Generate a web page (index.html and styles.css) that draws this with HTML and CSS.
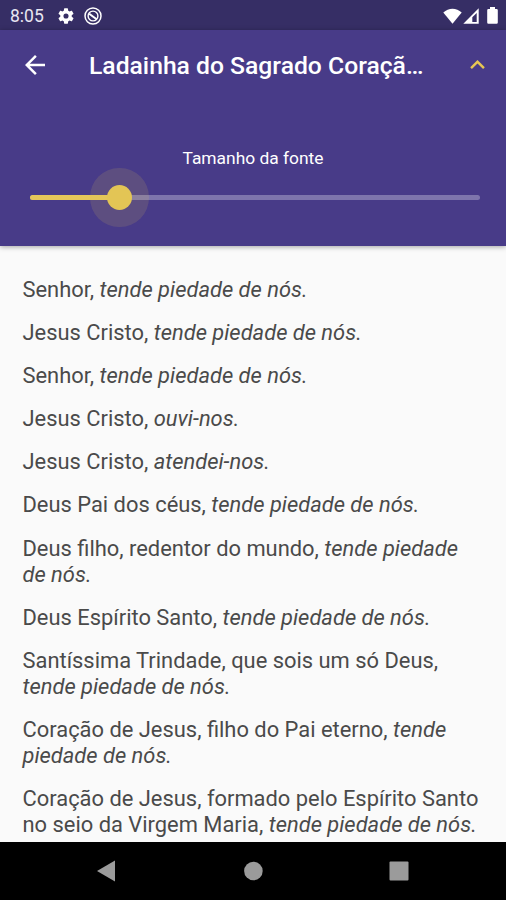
FILE: index.html
```
<!DOCTYPE html>
<html lang="pt-BR">
<head>
    <meta charset="UTF-8">
    <meta name="viewport" content="width=device-width, initial-scale=1.0">
    <link rel="stylesheet" href="styles.css">
    <title>Ladainha do Sagrado Coração</title>
</head>
<body>
    <div class="screen">
        <div class="status-bar">
            <span class="time">8:05</span>
            <svg class="gear" viewBox="2 2 20 20" width="16" height="16">
                <path fill="#fff" d="M19.14 12.94c.04-.3.06-.61.06-.94s-.02-.64-.07-.94l2.03-1.58a.49.49 0 0 0 .12-.61l-1.92-3.32a.49.49 0 0 0-.59-.22l-2.39.96a7 7 0 0 0-1.62-.94l-.36-2.54a.48.48 0 0 0-.48-.41h-3.84a.48.48 0 0 0-.47.41l-.36 2.54c-.59.24-1.13.57-1.62.94l-2.39-.96a.48.48 0 0 0-.59.22L2.74 8.87a.48.48 0 0 0 .12.61l2.03 1.58a6 6 0 0 0 0 1.88l-2.03 1.58a.49.49 0 0 0-.12.61l1.92 3.32c.12.22.37.29.59.22l2.39-.96c.5.38 1.03.7 1.62.94l.36 2.54c.05.24.24.41.48.41h3.84c.24 0 .44-.17.47-.41l.36-2.54a7 7 0 0 0 1.62-.94l2.39.96c.22.08.47 0 .59-.22l1.92-3.32a.47.47 0 0 0-.12-.61zM12 15.2a3.2 3.2 0 1 1 0-6.4 3.2 3.2 0 0 1 0 6.4z"/>
            </svg>
            <svg class="badge" viewBox="0 0 18 18" width="18" height="18" fill="none" stroke="#fff">
                <circle cx="9" cy="9" r="8" stroke-width="1.5"/>
                <circle cx="9" cy="9" r="4.9" stroke-width="1.4"/>
                <path d="M5.200 6.800l7.400 5.400" stroke-width="2"/>
            </svg>
            <div class="signals">
                <svg viewBox="0 0 19 16" width="19" height="16">
                    <path fill="#fff" d="M.3 4.6C5.5-.7 13.5-.7 18.7 4.6L9.5 15.8z"/>
                </svg>
                <svg viewBox="0 0 16 16" width="16" height="16">
                    <path fill="#fff" fill-rule="evenodd" d="M.3 15.7L15.7.3v15.4zM9.300 9.300v4.700h4.400V4.900z"/>
                </svg>
                <svg viewBox="0 0 11 17" width="11" height="17">
                    <path fill="#fff" d="M3 0h5v2h1.600q1.200 0 1.200 1.200v12.200q0 1.300-1.200 1.300H1.400Q.2 16.700.2 15.400V3.200Q.2 2 1.400 2H3z"/>
                </svg>
            </div>
        </div>

        <header class="app-bar">
            <div class="toolbar">
                <svg class="back" viewBox="4 4 16 16" width="20" height="20">
                    <path fill="#fff" d="M20 11H7.830l5.590-5.590L12 4l-8 8 8 8 1.410-1.410L7.830 13H20z"/>
                </svg>
                <h1>Ladainha do Sagrado Coraçã…</h1>
                <svg class="chevron" viewBox="6 8 12 7.400" width="15" height="9">
                    <path fill="#e7c653" d="M12 8l-6 6 1.410 1.410L12 10.830l4.590 4.580L18 14z"/>
                </svg>
            </div>
            <div class="font-size">Tamanho da fonte</div>
            <div class="slider">
                <div class="track"></div>
                <div class="track-active"></div>
                <div class="thumb"></div>
            </div>
        </header>

        <main class="prayer">
            <p>Senhor, <em>tende piedade de nós.</em></p>
            <p>Jesus Cristo, <em>tende piedade de nós.</em></p>
            <p>Senhor, <em>tende piedade de nós.</em></p>
            <p>Jesus Cristo, <em>ouvi-nos.</em></p>
            <p>Jesus Cristo, <em>atendei-nos.</em></p>
            <p>Deus Pai dos céus, <em>tende piedade de nós.</em></p>
            <p>Deus filho, redentor do mundo, <em>tende piedade de nós.</em></p>
            <p>Deus Espírito Santo, <em>tende piedade de nós.</em></p>
            <p>Santíssima Trindade, que sois um só Deus, <em>tende piedade de nós.</em></p>
            <p>Coração de Jesus, filho do Pai eterno, <em>tende piedade de nós.</em></p>
            <p>Coração de Jesus, formado pelo Espírito Santo no seio da Virgem Maria, <em>tende piedade de nós.</em></p>
        </main>

        <nav class="nav-bar">
            <svg viewBox="0 0 20 22" width="20" height="22"><path fill="#9b9b9b" d="M18 .5v21L0 11z"/></svg>
            <svg viewBox="0 0 20 20" width="20" height="20"><circle cx="10.400" cy="10" r="9.300" fill="#9b9b9b"/></svg>
            <svg viewBox="0 0 20 20" width="20" height="20"><rect x=".5" y=".5" width="19" height="19" rx="1" fill="#9b9b9b"/></svg>
        </nav>
    </div>
</body>
</html>
```
FILE: styles.css
```
body {
    font-family: Roboto, sans-serif;
    background-color: #fafafa;
    margin: 0;
}

.screen {
    display: flex;
    flex-direction: column;
    height: 900px;
    overflow: hidden;
}

.status-bar {
    display: flex;
    align-items: center;
    flex-shrink: 0;
    height: 30px;
    box-sizing: border-box;
    padding: 1px 8px 0 10px;
    background-color: #362e65;
    color: #ffffff;
}

.time {
    width: 48px;
    font-size: 17.5px;
    color: #e8e6f2;
}

.badge {
    margin-left: 10px;
}

.signals {
    display: flex;
    align-items: center;
    margin-left: auto;
}

.signals svg:nth-child(2) {
    margin: 0 8px 0 1px;
}

.app-bar {
    flex-shrink: 0;
    height: 216px;
    background-color: #483b88;
    color: #ffffff;
    box-shadow: 0 1px 5px rgba(0, 0, 0, 0.35);
    z-index: 1;
}

.toolbar {
    display: flex;
    align-items: center;
    height: 69px;
    padding: 0 21px 0 25px;
}

.toolbar h1 {
    margin: 2px 0 0 44px;
    font-size: 24.7px;
    font-weight: 500;
    line-height: 32px;
    white-space: nowrap;
}

.chevron {
    margin-left: auto;
}

.font-size {
    margin-top: 49px;
    text-align: center;
    font-size: 17.4px;
    line-height: 20px;
}

.slider {
    position: relative;
    margin: 27px 26px 0 30px;
    height: 5px;
}

.track {
    height: 5px;
    border-radius: 3px;
    background-color: #7e75ac;
}

.track-active {
    position: absolute;
    top: 0;
    left: 0;
    width: 89px;
    height: 5px;
    border-radius: 3px;
    background-color: #e5c65a;
}

.thumb {
    position: absolute;
    top: -10px;
    left: 77px;
    width: 25px;
    height: 25px;
    border-radius: 50%;
    background-color: #e3c555;
    box-shadow: 0 0 0 17px rgba(227, 197, 85, 0.14);
}

.prayer {
    flex: 1;
    min-height: 0;
    padding: 31px 22px 0 22.5px;
    color: #4a4a4a;
    font-size: 21.9px;
    line-height: 26px;
}

.prayer p {
    margin: 0 0 17.1px;
}

.nav-bar {
    display: flex;
    justify-content: space-between;
    align-items: center;
    flex-shrink: 0;
    height: 58px;
    box-sizing: border-box;
    padding: 0 97px;
    background-color: #000000;
}
```
